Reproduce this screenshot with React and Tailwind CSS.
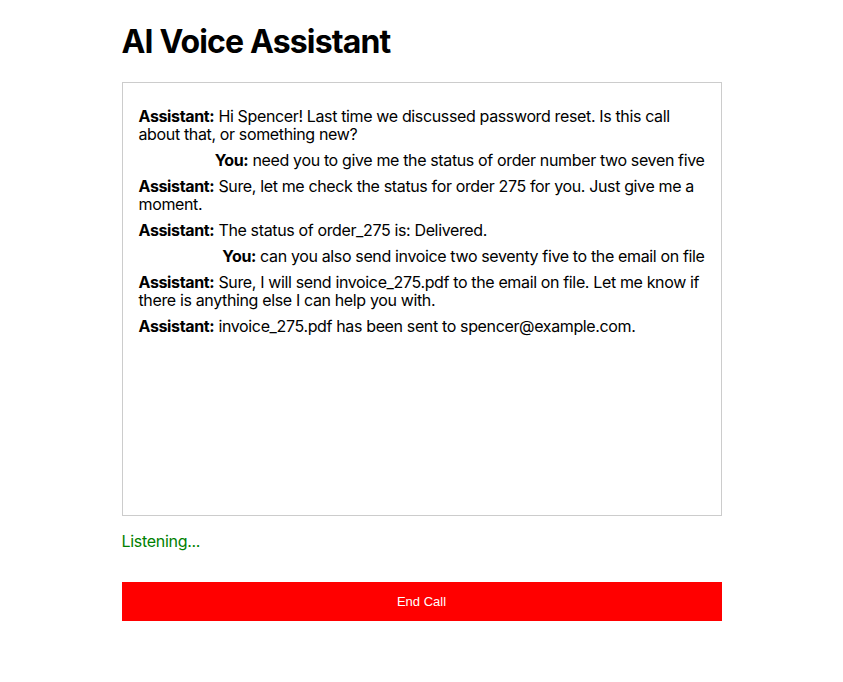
const messages = [
  { role: 'assistant', text: 'Hi Spencer! Last time we discussed password reset. Is this call about that, or something new?' },
  { role: 'user', text: 'need you to give me the status of order number two seven five' },
  { role: 'assistant', text: 'Sure, let me check the status for order 275 for you. Just give me a moment.' },
  { role: 'assistant', text: 'The status of order_275 is: Delivered.' },
  { role: 'user', text: 'can you also send invoice two seventy five to the email on file' },
  { role: 'assistant', text: 'Sure, I will send invoice_275.pdf to the email on file. Let me know if there is anything else I can help you with.' },
  { role: 'assistant', text: 'invoice_275.pdf has been sent to spencer@example.com.' },
];

export default function App() {
  return (
    <div className="min-h-screen bg-white text-black font-['Inter',sans-serif]">
      <div className="w-[600px] mx-auto pt-[23px]">
        <h1 className="text-[32px] font-bold leading-[38px] mb-[21px] tracking-[-0.85px]">AI Voice Assistant</h1>

        {/* Transcript */}
        <div className="h-[434px] border border-[#cccccc] p-4 overflow-y-auto text-base leading-[18px] tracking-[-0.36px]">
          {messages.map((m, i) => (
            <p key={i} className={`my-2 ${m.role === 'user' ? 'text-right' : 'text-left'}`}>
              <strong className="font-bold">{m.role === 'user' ? 'You:' : 'Assistant:'}</strong> {m.text}
            </p>
          ))}
        </div>

        <p className="mt-4 text-base leading-[18px] tracking-[-0.3px] text-[#008000]">Listening...</p>

        <button
          type="button"
          className="mt-8 w-full h-[39px] bg-[#ff0000] text-white text-[13px] font-['Liberation_Sans',Arial,sans-serif]"
        >
          End Call
        </button>
      </div>
    </div>
  );
}
